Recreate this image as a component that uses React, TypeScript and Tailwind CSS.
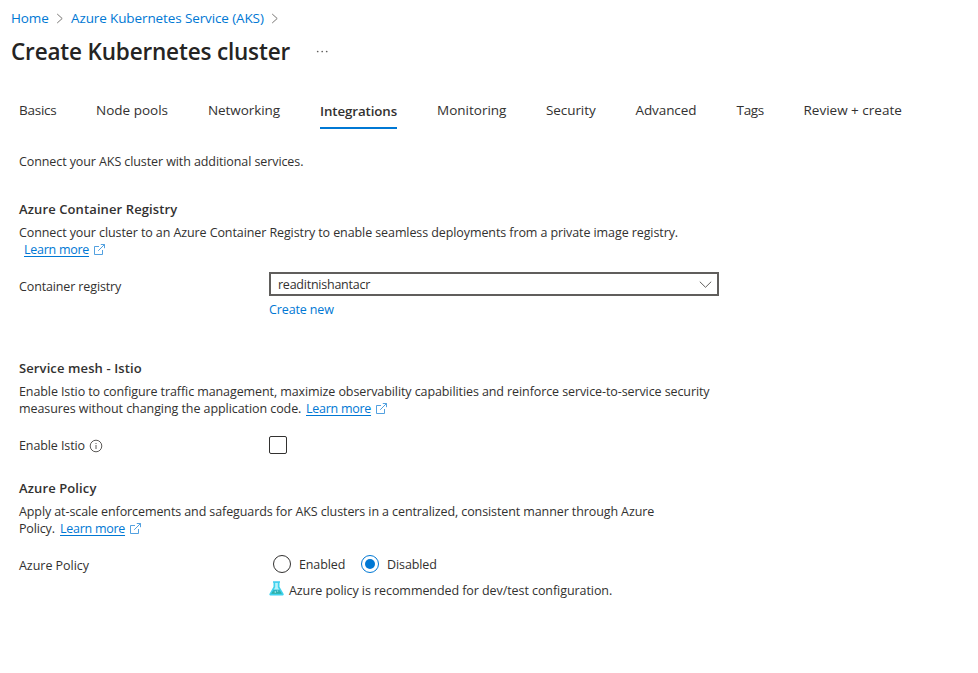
import type { ReactNode } from "react";

function Crumb() {
  return (
    <svg width="8" height="12" viewBox="0 0 8 12" fill="none" stroke="#7a7876" strokeWidth="1">
      <path d="M1.2 2 6.2 6.5l-5 4.5" />
    </svg>
  );
}

function LearnMore() {
  return (
    <a href="#" className="flex h-[17px] text-[#0078d4]">
      <span className="w-[65px] tracking-[-0.27px] underline decoration-1 underline-offset-2">Learn more</span>
      <svg className="ml-[5px] mt-[3px]" width="11" height="11" viewBox="0 0 11 11" fill="none" stroke="#3f96dd" strokeWidth="0.9">
        <path d="M5 2.5H.5v8h8V6M6.8.5h3.700v3.700M10.400.6 4.200 6.800" />
      </svg>
    </a>
  );
}

function Heading({ children }: { children: ReactNode }) {
  return <h2 className="h-[17px] text-[13px] font-semibold tracking-[0.11px]">{children}</h2>;
}

function Line({ children }: { children: ReactNode }) {
  return <div className="flex h-[17px] tracking-[-0.093px]">{children}</div>;
}

function Label({ children }: { children: ReactNode }) {
  return <div className="flex w-[250px] shrink-0">{children}</div>;
}

const tabs = [
  { label: "Basics", box: "w-[37px] tracking-[-0.25px]" },
  { label: "Node pools", box: "w-[72px]" },
  { label: "Networking", box: "w-[72px] tracking-[-0.08px]" },
  { label: "Integrations", box: "w-[77px]", active: true },
  { label: "Monitoring", box: "w-[69px]" },
  { label: "Security", box: "w-[49.5px] tracking-[-0.08px]" },
  { label: "Advanced", box: "w-[61px] tracking-[-0.1px]" },
  { label: "Tags", box: "w-[27px] tracking-[-0.3px]" },
  { label: "Review + create", box: "w-[98px]" },
];

export default function App() {
  return (
    <main className="h-[673px] w-[978px] overflow-hidden whitespace-nowrap bg-white pt-2 font-['Open_Sans','Noto_Sans',sans-serif] text-[12.5px] leading-[17px] text-[#323130]">
      <nav className="flex h-5 items-center pl-[11px] text-[13.5px] leading-5 text-[#0078d4]">
        <a href="#" className="w-[38px] tracking-[-0.1px]">Home</a>
        <span className="ml-[7px] mr-[7px]"><Crumb /></span>
        <a href="#" className="w-[194px] tracking-[-0.115px]">Azure Kubernetes Service (AKS)</a>
        <span className="ml-[6px]"><Crumb /></span>
      </nav>

      <header className="mt-[8px] flex h-8 items-center pl-[11px]">
        <h1 className="w-[279px] text-[22.5px] font-semibold leading-8 tracking-[-0.17px] text-[#252423]">Create Kubernetes cluster</h1>
        <svg className="ml-[26px]" width="14" height="4" viewBox="0 0 14 4" fill="#605e5c">
          <circle cx="1.7" cy="1.500" r="0.85" />
          <circle cx="6.2" cy="1.500" r="0.85" />
          <circle cx="10.7" cy="1.500" r="0.85" />
        </svg>
      </header>

      <div className="mt-[32px] flex h-[29px] gap-10 pl-[19px] text-[13.5px] leading-5">
        {tabs.map((t) => (
          <div key={t.label} className={t.box}>
            {t.active ? (
              <div className="h-[29px] border-b-2 border-[#0078d4] pt-px text-[13.3px] font-semibold tracking-[-0.1px]">{t.label}</div>
            ) : (
              t.label
            )}
          </div>
        ))}
      </div>

      <div className="pl-[19px] pt-6">
        <Line>Connect your AKS cluster with additional services.</Line>

        <section className="mt-[31px]">
          <Heading>Azure Container Registry</Heading>
          <div className="mt-[6px]">
            <Line>Connect your cluster to an Azure Container Registry to enable seamless deployments from a private image registry.</Line>
            <div className="pl-[5px]"><LearnMore /></div>
          </div>
          <div className="mt-[14px] flex h-[46px]">
            <Label><span className="pt-[6px] tracking-[-0.13px]">Container registry</span></Label>
            <div>
              <div className="flex h-6 w-[450px] items-center justify-between border-2 border-[#605e5c] pl-[7px] pr-[5px]">
                <span className="tracking-[-0.24px]">readitnishantacr</span>
                <svg width="13" height="9" viewBox="0 0 13 9" fill="none" stroke="#605e5c" strokeWidth="1">
                  <path d="m.8 1.7 5.7 5.6 5.7-5.6" />
                </svg>
              </div>
              <a href="#" className="mt-[5px] block tracking-[-0.12px] text-[#0078d4]">Create new</a>
            </div>
          </div>
        </section>

        <section className="mt-[42px]">
          <Heading>Service mesh - Istio</Heading>
          <div className="mt-[6px]">
            <Line>Enable Istio to configure traffic management, maximize observability capabilities and reinforce service-to-service security</Line>
            <Line>
              <span className="w-[287px] tracking-[-0.07px]">measures without changing the application code.</span>
              <LearnMore />
            </Line>
          </div>
          <div className="mt-[19px] flex h-[18px]">
            <Label>
              <span className="w-[70px] pt-px tracking-[-0.1px]">Enable Istio</span>
              <svg className="mt-[3px]" width="14" height="14" viewBox="0 0 14 14" fill="none" stroke="#484644" strokeWidth="0.9">
                <circle cx="7" cy="7" r="5.8" />
                <path d="M7 6v4M7 4v1" />
              </svg>
            </Label>
            <span role="checkbox" aria-checked="false" className="size-[18px] rounded-[2px] border border-[#323130]" />
          </div>
        </section>

        <section className="mt-[26px]">
          <Heading>Azure Policy</Heading>
          <div className="mt-[6px]">
            <Line><span className="tracking-[-0.1px]">Apply at-scale enforcements and safeguards for AKS clusters in a centralized, consistent manner through Azure</span></Line>
            <Line>
              <span className="w-[41px] tracking-[-0.15px]">Policy.</span>
              <LearnMore />
            </Line>
          </div>
          <div className="mt-[18px] flex">
            <Label><span className="pt-[2px] tracking-[-0.04px]">Azure Policy</span></Label>
            <div>
              <div className="flex h-[18px] pl-1" role="radiogroup">
                <span className="size-[18px] rounded-full border border-[#323130]" />
                <span className="ml-2 w-[62px] pt-px tracking-[-0.12px]">Enabled</span>
                <span className="flex size-[18px] items-center justify-center rounded-full border border-[#0078d4]">
                  <span className="size-[10px] rounded-full bg-[#0078d4]" />
                </span>
                <span className="ml-2 pt-px tracking-[-0.1px]">Disabled</span>
              </div>
              <div className="mt-[8px] flex">
                <svg width="15" height="15" viewBox="0 0 15 15">
                  <defs>
                    <linearGradient id="flask" x1="0" y1="0" x2="0" y2="1">
                      <stop offset="0" stopColor="#2bb5c9" />
                      <stop offset="1" stopColor="#2fae9e" />
                    </linearGradient>
                  </defs>
                  <path d="M4.500 1.200h6v4.600l4.200 7.200q.3 1.300-.9 1.500H1.300Q0 14.300.400 13L4.500 5.800Z" fill="#3fd3ee" />
                  <path d="M6.200 1.800h2.600v4.500l1.500 2.500H4.700l1.500-2.500Z" fill="#b9f2fa" />
                  <path d="M4.500 8.800h6l2.400 4H2.100Z" fill="url(#flask)" />
                  <path d="M4 .300h7v1.400H4Z" fill="#32c8ec" />
                  <circle cx="6.300" cy="11" r=".8" fill="#b9f2fa" />
                  <circle cx="8.600" cy="10" r=".6" fill="#b9f2fa" />
                </svg>
                <span className="ml-[5px] pt-px tracking-[-0.07px]">Azure policy is recommended for dev/test configuration.</span>
              </div>
            </div>
          </div>
        </section>
      </div>
    </main>
  );
}
